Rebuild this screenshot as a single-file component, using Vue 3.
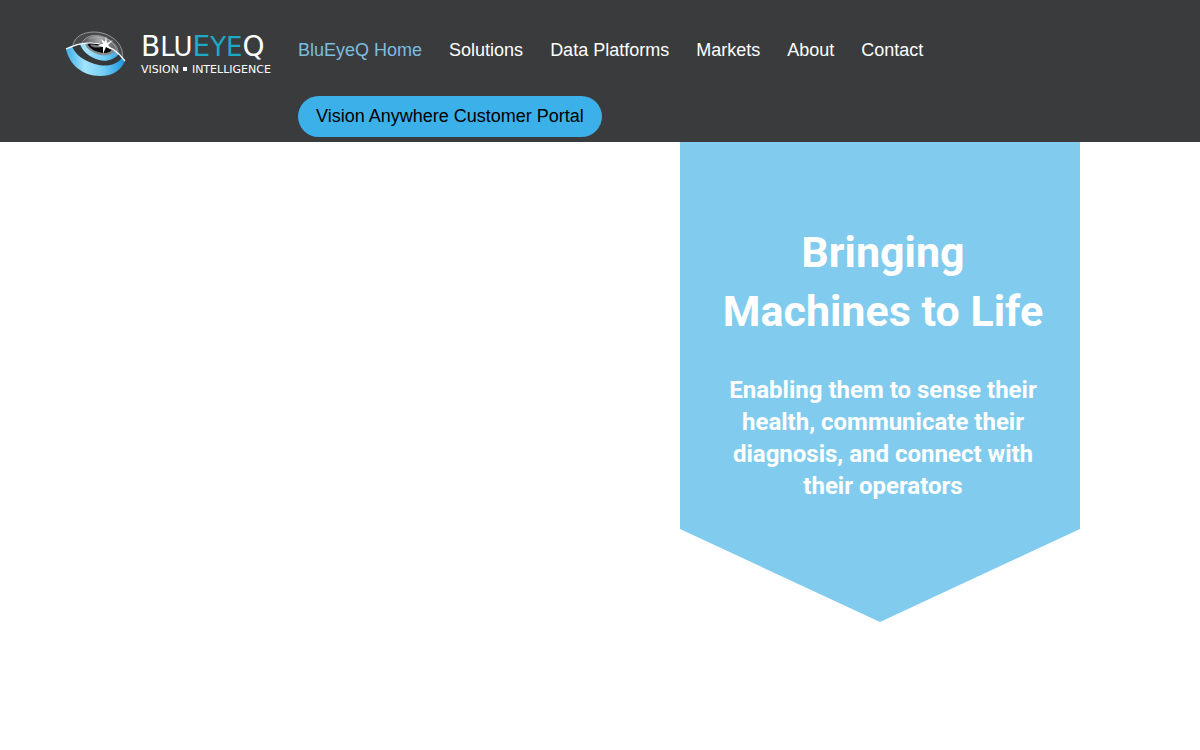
<script setup>
const links = ['BluEyeQ Home', 'Solutions', 'Data Platforms', 'Markets', 'About', 'Contact']
</script>

<template>
  <div class="page">
    <header class="site-header">
      <a class="brand" href="#" aria-label="BluEyeQ Vision Intelligence">
        <svg class="eye" viewBox="0 0 62 48" aria-hidden="true">
          <defs>
            <linearGradient id="iris" x1="0" y1="0" x2="1" y2="0">
              <stop offset="0" stop-color="#3daee8" />
              <stop offset=".32" stop-color="#a5e3fc" />
              <stop offset=".65" stop-color="#70ccf4" />
              <stop offset="1" stop-color="#1994dc" />
            </linearGradient>
            <linearGradient id="lid" x1="0" y1="0" x2="1" y2="0">
              <stop offset="0" stop-color="#4c4e50" />
              <stop offset=".5" stop-color="#a6a8a9" />
              <stop offset="1" stop-color="#5a5c5e" />
            </linearGradient>
          </defs>
          <path d="M8 15C10 6 19 2 29 2C45 2 58 12 59 28C50 17 30 10 8 15Z" fill="#47494b" />
          <path d="M17 13C20 7 26 5 33 6C44 7 51 14 52 21C42 14 30 11 17 13Z" fill="url(#lid)" />
          <path d="M1 19C4 34 17 46 35 46C48 46 56 40 60 31C51 18 39 13 25 13C15 13 7 15 1 19Z" fill="url(#iris)" />
          <path d="M7 16C10 25 20 32 34 35C44 37 52 34 57 28L54 24C49 30 41 32 34 30C24 27 17 21 15 14Z" fill="#35383a" />
          <path d="M20 13C21 19 28 23 36 25C43 26 49 24 50 20C43 15 30 11 20 13Z" fill="#85898c" />
          <path d="M22 13C24 19 31 22 38 23C44 23 47 21 47 18C39 13 29 11 22 13Z" fill="#08090b" />
          <path d="M25 15C28 14 33 15 36 17C33 18 27 18 25 15Z" fill="#74797c" />
          <path d="M8 15C10 6 19 2 29 2C45 2 60 14 57 28M17 13C21 4 35 3 44 10C51 15 54 22 49 26M24 9C35 3 55 11 53 25" fill="none" stroke="#a9abac" stroke-width=".8" />
          <path d="M1 19C21 9 45 10 60 31" fill="none" stroke="#fff" stroke-width="1.300" />
          <path d="M41 6L42 13L48 10L43 15L47 20L41 17L38 24L38 17L32 16L38 14L36 9L40 12Z" fill="#fff" />
        </svg>
        <span class="brand-text">
          <span class="wordmark">B<small>LU</small><span class="teal">E<small>YE</small></span>Q</span>
          <span class="tagline">VISION <i></i> INTELLIGENCE</span>
        </span>
      </a>
      <nav class="nav" aria-label="Main">
        <a v-for="(link, i) in links" :key="link" href="#" :class="{ active: i === 0 }">{{ link }}</a>
        <span class="portal-row"><a class="portal" href="#">Vision Anywhere Customer Portal</a></span>
      </nav>
    </header>
    <main class="hero">
      <section class="banner">
        <h1>Bringing<br />Machines to Life</h1>
        <p>Enabling them to sense their<br />health, communicate their<br />diagnosis, and connect with<br />their operators</p>
      </section>
    </main>
  </div>
</template>

<style>
body {
  margin: 0;
  background: #fff;
}
</style>

<style scoped>
.page {
  font-family: "Liberation Sans", Arial, sans-serif;
}
.site-header {
  display: flex;
  align-items: flex-start;
  padding: 17px 60px 5px 65px;
  background: #3a3b3d;
}
.brand {
  display: flex;
  flex: none;
  width: 233px;
  padding-top: 13px;
  box-sizing: border-box;
  color: #fff;
  text-decoration: none;
}
.eye {
  width: 62px;
  height: 48px;
  margin-right: 14px;
}
.brand-text {
  display: flex;
  flex-direction: column;
  font-family: "DejaVu Sans", sans-serif;
  white-space: nowrap;
}
.wordmark {
  font-size: 28px;
  line-height: 34px;
}
.wordmark small {
  font-size: 26px;
}
.teal {
  color: #1ba9c5;
}
.tagline {
  font-size: 11px;
  line-height: 12px;
}
.tagline i {
  display: inline-block;
  width: 4px;
  height: 4px;
  margin: 0 1px 2px;
  background: #fff;
}
.nav {
  display: flex;
  flex: 1;
  flex-wrap: wrap;
  column-gap: 27px;
  font-size: 18px;
  line-height: 66px;
}
.nav a {
  color: #fff;
  text-decoration: none;
}
.nav a.active {
  color: #7abde0;
}
.portal-row {
  flex-basis: 100%;
  display: flex;
  padding-top: 13px;
}
.nav .portal {
  padding: 0 18px;
  border-radius: 21px;
  background: #3cb0e8;
  color: #000;
  line-height: 41px;
}
.hero {
  display: flex;
  justify-content: flex-end;
  padding-right: 10%;
}
.banner {
  width: 400px;
  padding: 81px 36px 120px 42px;
  box-sizing: border-box;
  background: #81ccee;
  clip-path: polygon(0 0, 100% 0, 100% calc(100% - 93px), 50% 100%, 0 calc(100% - 93px));
  color: #fff;
  font-family: Roboto, sans-serif;
  font-weight: 700;
  text-align: center;
  white-space: nowrap;
}
.banner h1 {
  margin: 0 0 33px;
  font-size: 43px;
  line-height: 59px;
}
.banner p {
  margin: 0;
  font-size: 24px;
  line-height: 32px;
}
</style>
